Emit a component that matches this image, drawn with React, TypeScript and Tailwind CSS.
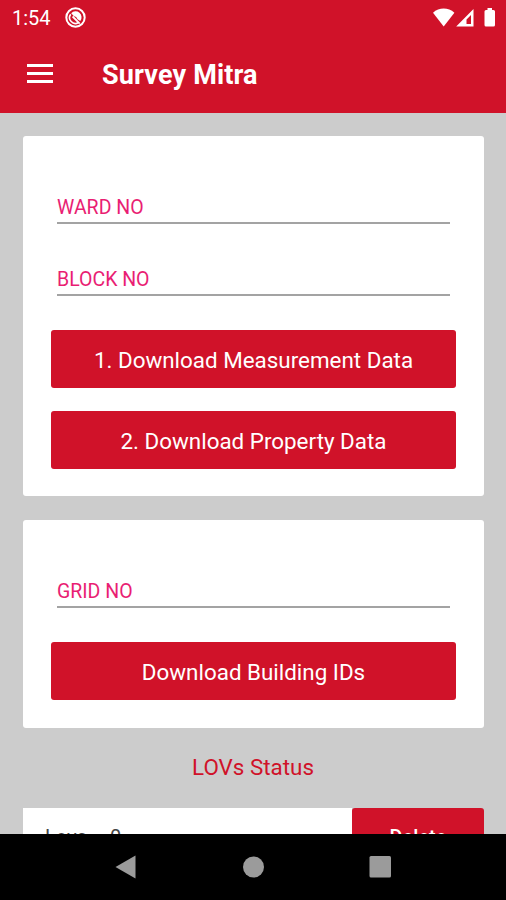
import type { ReactNode } from 'react';

function StatusBar() {
  return (
    <div className="flex h-9 items-center pr-[10px] pl-3 text-white">
      <span className="w-[38px] whitespace-nowrap text-[20px] leading-9">1:54</span>
      <svg className="mt-[-2px] ml-[15px]" width="21" height="21" viewBox="0 0 21 21" fill="none">
        <circle cx="10.5" cy="10.5" r="9.2" stroke="currentColor" strokeWidth="2" />
        <path d="M6.2 6.2A6 6 0 0 1 15.3 14L12.5 12.2Q11.5 9.2 9 9.3Z" fill="currentColor" />
        <path d="M5.7 7.2A5.8 5.8 0 0 0 13.5 15.5" stroke="currentColor" strokeWidth="1.6" />
        <path d="M7.6 9.5L14.7 16.6" stroke="currentColor" strokeWidth="1.8" />
      </svg>
      <svg className="ml-auto" width="64" height="20" viewBox="0 0 64 20" fill="currentColor">
        {/* wifi */}
        <path d="M1 4.8C7.2-.8 16.2-.8 22.4 4.800L11.7 18.500Z" />
        {/* signal */}
        <path fillRule="evenodd" d="M24.2 18.5L41.5 1V18.5ZM34.5 16H39V7L34.5 11.5Z" />
        {/* battery */}
        <path d="M55.5 0h4.500v2h1.500q1.500 0 1.500 1.500V17q0 1.500-1.500 1.500h-7.500q-1.500 0-1.500-1.500V3.500q0-1.500 1.500-1.500h1.500z" />
      </svg>
    </div>
  );
}

function Field({ label }: { label: string }) {
  return (
    <div className="mx-[6px] flex h-[72px] items-end border-b-2 border-[#a3a3a3]">
      <span className="text-[19.5px] leading-7 text-[#e91e73]">{label}</span>
    </div>
  );
}

function DownloadButton({ children }: { children: ReactNode }) {
  return (
    <button className="block h-[58px] w-full rounded-[3px] bg-[#d01229] pt-[3px] text-[22.4px] text-white">
      {children}
    </button>
  );
}

export default function App() {
  return (
    <div className="flex h-[900px] w-[506px] flex-col overflow-hidden bg-[#cccccc] font-['Roboto',sans-serif]">
      <header className="h-[113px] shrink-0 bg-[#d01229] text-white">
        <StatusBar />
        <div className="flex h-[77px] items-center pl-[27px]">
          <button className="mt-[-2px] flex w-[26px] flex-col gap-[5px]" aria-label="Menu">
            <span className="h-[3px] w-full bg-white" />
            <span className="h-[3px] w-full bg-white" />
            <span className="h-[3px] w-full bg-white" />
          </button>
          <h1 className="mt-[2px] ml-[49px] text-[27px] font-bold tracking-[0.15px]">Survey Mitra</h1>
        </div>
      </header>

      <main className="min-h-0 flex-1 overflow-hidden px-[23px] pt-[23px]">
        <section className="h-[360px] w-[461px] rounded-[3px] bg-white px-7 pt-4">
          <Field label="WARD NO" />
          <Field label="BLOCK NO" />
          <div className="mt-[34px] flex flex-col gap-[23px]">
            <DownloadButton>1. Download Measurement Data</DownloadButton>
            <DownloadButton>2. Download Property Data</DownloadButton>
          </div>
        </section>

        <section className="mt-6 h-[208px] w-[461px] rounded-[3px] bg-white px-7 pt-4">
          <Field label="GRID NO" />
          <div className="mt-[34px]">
            <DownloadButton>Download Building IDs</DownloadButton>
          </div>
        </section>

        <h2 className="mt-[23px] text-center text-[22.4px] leading-8 text-[#d01229]">LOVs Status</h2>

        {/* row continues below the navigation bar */}
        <div className="mt-[25px] flex h-[58px] w-[461px]">
          <span className="flex-1 bg-white pl-[22px] text-[20px] leading-[58px] text-[#444] [word-spacing:1px]">
            Lovs = 0
          </span>
          <button className="w-[132px] rounded-[3px] bg-[#d01229] text-[20px] font-medium text-white">Delete</button>
        </div>
      </main>

      <nav className="flex h-[66px] shrink-0 items-center bg-black">
        <svg width="506" height="66" viewBox="0 0 506 66" fill="#9b9b9b">
          <path d="M115.5 33L135.5 21.5V44.5Z" />
          <circle cx="253.5" cy="33" r="10.5" />
          <rect x="369.5" y="22" width="21.5" height="21.5" rx="1.5" />
        </svg>
      </nav>
    </div>
  );
}
